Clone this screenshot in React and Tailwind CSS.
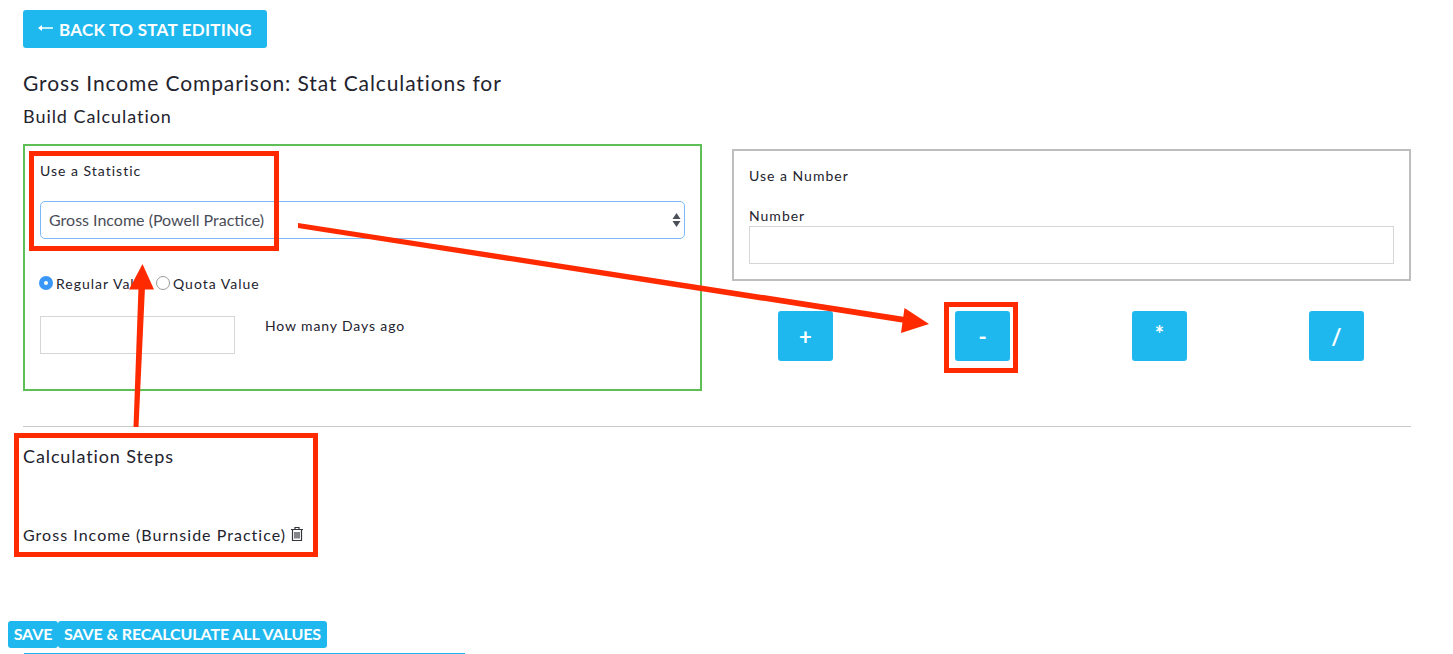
import React from "react";

const Btn = ({ children, className = "" }) => (
  <button className={`bg-[#1fb8ee] text-white font-bold rounded-[3px] flex items-center justify-center ${className}`}>{children}</button>
);

function OpButton({ children, className = "" }) {
  return <Btn className={`w-[55px] h-[50px] text-[22px] pl-[1px] ${className}`}>{children}</Btn>;
}

export default function App() {
  return (
    <div className="relative w-[1453px] h-[654px] overflow-hidden bg-white text-[#23232e] tracking-[1px]" style={{ fontFamily: "Lato, sans-serif" }}>
      <div className="pl-[23px] pt-[10px] w-[1411px]">
        <Btn className="w-[244px] h-[38px] pt-[1px] text-[17px] tracking-[0.25px] gap-[6px]">
          <svg width="15" height="10" viewBox="0 0 15 10" fill="white" className="mb-[4px]">
            <path d="M15 4.2H4V2L0 5L4 8V5.8H15Z" />
          </svg>
          BACK TO STAT EDITING
        </Btn>
        <h1 className="mt-[23px] text-[21px] leading-[24px] tracking-[0.9px]">Gross Income Comparison: Stat Calculations for</h1>
        <h2 className="mt-[9px] text-[18px] leading-[24px] tracking-[0.95px]">Build Calculation</h2>

        <div className="flex mt-[16px] items-start gap-[30px]">
          <div className="w-[679px] h-[247px] border-2 border-[#5fbf57] pl-[15px] pr-[15px] pt-[16px]">
            <div className="text-[14px] leading-[18px]">Use a Statistic</div>
            <div className="mt-[21px] h-[38px] w-[645px] border border-[#7db8f7] rounded-[5px] flex items-center justify-between pl-[8px] pr-[3px] text-[16px] tracking-[0px] text-[#4a4d57]">
              <span>Gross Income (Powell Practice)</span>
              <svg width="9" height="16" viewBox="0 0 9 16" fill="#4b505a">
                <path d="M4.5 1L8.5 7H0.5Z M4.5 15L0.5 9H8.5Z" />
              </svg>
            </div>
            <div className="mt-[34px] -ml-[1px] flex items-center h-[20px] text-[14px]">
              <span className="w-[14px] h-[14px] rounded-full bg-[#3b97f7] flex items-center justify-center mr-[3px]">
                <span className="w-[4px] h-[4px] rounded-full bg-white"></span>
              </span>
              <span className="w-[100px] whitespace-nowrap">Regular Value</span>
              <span className="w-[14px] h-[14px] rounded-full border border-[#9a9a9a] mr-[3px]"></span>
              <span>Quota Value</span>
            </div>
            <div className="flex mt-[23px]">
              <div className="w-[195px] h-[38px] border border-[#d6d6d6]"></div>
              <div className="ml-[30px] text-[14px] tracking-[0.87px] leading-[20px]">How many Days ago</div>
            </div>
          </div>

          <div className="flex-1 mt-[5px]">
            <div className="h-[132px] border-2 border-[#bcbec0] pl-[15px] pr-[15px] pt-[16px]">
              <div className="text-[14px] leading-[18px]">Use a Number</div>
              <div className="text-[14px] leading-[18px] mt-[22px]">Number</div>
              <div className="mt-[1px] h-[38px] border border-[#d6d6d6]"></div>
            </div>
            <div className="flex mt-[30px] pl-[46px] gap-[122px]">
              <OpButton>+</OpButton>
              <OpButton>-</OpButton>
              <OpButton className="pb-[6px]">*</OpButton>
              <OpButton>/</OpButton>
            </div>
          </div>
        </div>

        <div className="mt-[35px] border-t border-[#c8c8c8]"></div>
        <h3 className="mt-[17px] text-[18px] leading-[24px] tracking-[0.89px]">Calculation Steps</h3>
        <div className="mt-[55px] flex items-center h-[24px] text-[16px] tracking-[1.03px]">
          <span>Gross Income (Burnside Practice)</span>
          <svg className="ml-[4px] mb-[3px]" width="14" height="16" viewBox="0 0 14 16" fill="none" stroke="#33343c" strokeWidth="1.2">
            <path d="M1 3.5H13M5 3.5V1.5H9V3.5M2.5 3.5V14.5H11.5V3.5" />
            <path d="M5 6V12.5M7 6V12.5M9 6V12.5" />
          </svg>
        </div>
      </div>

      <div className="flex mt-[74px] ml-[8px] text-[16px] tracking-[-0.1px] h-[27px]">
        <Btn className="w-[50px] h-[27px] pb-[2px]">SAVE</Btn>
        <Btn className="w-[269px] h-[27px] pb-[2px]">SAVE &amp; RECALCULATE ALL VALUES</Btn>
      </div>
      <div className="ml-[24px] mt-[5px] w-[441px] h-[2px] bg-[#1fb8ee]"></div>

      <div className="absolute left-[29px] top-[151px] w-[250px] h-[100px] border-[5px] border-[#ff2a00]"></div>
      <div className="absolute left-[14px] top-[433px] w-[304px] h-[124px] border-[5px] border-[#ff2a00]"></div>
      <div className="absolute left-[944px] top-[302px] w-[74px] h-[71px] border-[5px] border-[#ff2a00]"></div>

      <svg className="absolute left-0 top-0 pointer-events-none" width="1453" height="654" viewBox="0 0 1453 654" fill="#ff2a00">
        <path d="M298 223L905 317L905 323L298 228Z" />
        <path d="M929 324L904.5 308L901 333Z" />
        <path d="M133.5 427L138.5 427L145 287L138.5 287Z" />
        <path d="M142.5 264L129 289.5L154 289.5Z" />
      </svg>
    </div>
  );
}
